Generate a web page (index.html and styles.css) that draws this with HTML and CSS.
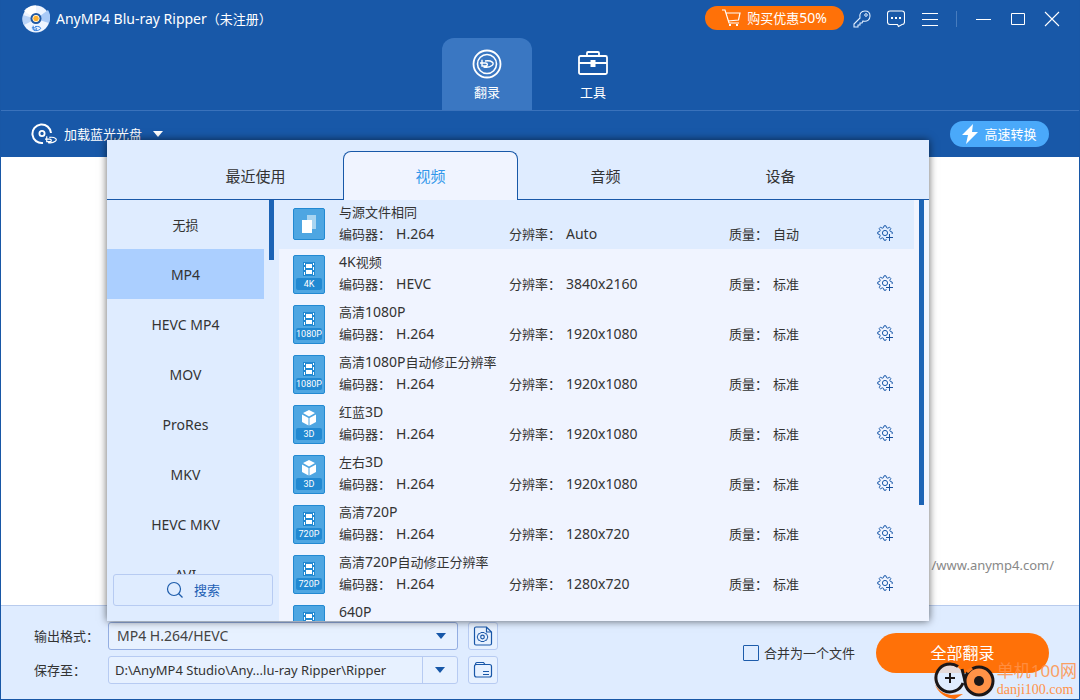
FILE: index.html
```html
<!DOCTYPE html>
<html lang="zh-CN">
<head>
<meta charset="utf-8">
<title>AnyMP4 Blu-ray Ripper</title>
<link rel="stylesheet" href="styles.css">
</head>
<body>
<svg class="sprite" aria-hidden="true">
  <symbol id="gear" viewBox="0 0 16 16"><g fill="none" stroke="#1d5cab"><path d="M13.300 6.500 15.200 7v2M13.300 6.500l-.5-1.300 1-1.700-1.300-1.300-1.700 1-1.300-.5L9 .8H7l-.5 1.900-1.300.5-1.700-1-1.300 1.300 1 1.700-.5 1.300L.8 7v2l1.900.5.5 1.300-1 1.700 1.300 1.300 1.700-1 1.300.5.500 1.900h2l.3-1"/><circle cx="8" cy="8" r="2.600"/><path d="M12.500 9v7M9 12.500h7" stroke="#17509c"/></g></symbol>
  <symbol id="film" viewBox="0 0 12 14"><path fill="#2289d2" d="M0 0h12v14H0z"/><path fill="#fff" d="M1 1h1v2H1zM1 5h1v3H1zM1 10h1v3H1zM10 1h1v2h-1zM10 5h1v3h-1zM10 10h1v3h-1zM3 2h6v4H3zM3 8h6v4H3z"/></symbol>
  <symbol id="cube" viewBox="0 0 16 18"><path fill="#fff" d="M8 1 14 4 8 7.600 2 4zM1 5.500 7.500 9v7.500L1 13zM15 5.500 8.500 9v7.500L15 13z"/></symbol>
  <symbol id="copy" viewBox="0 0 16 20"><path fill="#a9d5f1" d="M6 1h9v14H6z"/><path fill="#fff" d="M1 6h10v13H1z"/></symbol>
  <symbol id="arrow" viewBox="0 0 10 6"><path fill="currentColor" d="M0 0h10L5 6z"/></symbol>
  <symbol id="bluray" viewBox="0 0 14 9"><path fill="none" stroke="currentColor" stroke-width="1.400" d="M2 0v6.500h3.500c2.500 0 2.500-3 0-3H0M5 1.500C12 .5 15 4 12 6c-2 1.500-6 2-8.500 1.500"/></symbol>
</svg>
<div class="window">
  <header class="header">
    <div class="titlebar">
      <svg class="logo" viewBox="0 0 28 28"><circle cx="14" cy="14" r="13.500" fill="#edf4ff"/><path d="M14 14 2 6A14 14 0 0 1 14 .5z" fill="#fff"/><path d="M14 14 26 5A14 14 0 0 1 27 18z" fill="#a9caf7"/><path d="M14 14 1 10A14 14 0 0 0 2 20z" fill="#b8d3f8"/><circle cx="14" cy="13.500" r="5.500" fill="#2059a5"/><circle cx="14" cy="13.500" r="3.200" fill="#ffb02d" stroke="#fff0cf"/><use href="#bluray" x="9" y="20.500" width="11" height="6" color="#2475dc"/></svg>
      <h1 class="title">AnyMP4 Blu-ray Ripper<small>（未注册）</small></h1>
      <button class="buy"><svg width="19" height="18" viewBox="0 0 19 18"><g fill="none" stroke="#fff" stroke-width="1.200"><path d="M0 1h3l4 13h10M4 4h14l-1.500 7-10.500 1"/></g><path fill="#fff" d="M7 15h2v2H7zM14 15h2v2h-2z"/></svg><span>购买优惠<b>50%</b></span></button>
      <div class="tools">
        <button class="tool" aria-label="注册"><svg width="18" height="18" viewBox="0 0 18 18"><path fill="none" stroke="#e2efff" stroke-width="1.100" d="M7 8C6 4 8 1 12 1c3 0 5 2 5 5 0 4-3 6-7 5l-1 2H7v2H5v2H1v-3l6-6z"/><circle cx="13" cy="5" r="1.300" fill="none" stroke="#e2efff"/></svg></button>
        <button class="tool" aria-label="反馈"><svg width="18" height="18" viewBox="0 0 18 18"><path fill="none" stroke="#fff" stroke-width="1.100" d="M3 1h12q2.500 0 2.500 2.500V12q0 2.500-2.500 2.500l-3.500 2-1-2H3Q.5 14.500.5 12V3.500Q.5 1 3 1z"/><path fill="#fff" d="M4 7h2v2H4zM8 7h2v2H8zM12 7h2v2h-2z"/></svg></button>
        <button class="tool" aria-label="菜单"><svg width="18" height="18" viewBox="0 0 18 18"><path stroke="#fff" d="M1 3.500h16M1 9.500h16M1 15.500h16"/></svg></button>
      </div>
      <div class="controls">
        <button class="tool" aria-label="最小化"><svg width="16" height="16" viewBox="0 0 16 16"><path stroke="#fff" d="M0 8.500h15"/></svg></button>
        <button class="tool" aria-label="最大化"><svg width="16" height="16" viewBox="0 0 16 16"><path fill="none" stroke="#fff" d="M1.500 2.500h13v11h-13z"/></svg></button>
        <button class="tool" aria-label="关闭"><svg width="16" height="16" viewBox="0 0 16 16"><path stroke="#fff" stroke-width="1.100" d="m1 1 14 14M15 1 1 15"/></svg></button>
      </div>
    </div>
    <nav class="modes">
      <button class="mode mode-active"><svg width="30" height="30" viewBox="0 0 30 30"><g fill="none" stroke="#fff"><circle cx="15" cy="15" r="13.500" stroke-width="1.800"/><circle cx="15" cy="15" r="9.500" stroke-width="1.600"/></g><use href="#bluray" x="8" y="10.500" width="14" height="9"/></svg>翻录</button>
      <button class="mode"><svg width="30" height="30" viewBox="0 0 30 30"><g fill="none" stroke="#fff" stroke-width="1.800"><rect x="1" y="7" width="28" height="18" rx="1.500"/><path d="M9 7V4q0-1 1-1h10q1 0 1 1v3M1 14h28"/></g><path fill="#fff" d="M12.500 11h5v7h-5z"/></svg>工具</button>
    </nav>
  </header>
  <div class="toolbar">
    <button class="load"><svg width="26" height="22" viewBox="0 0 26 22"><g fill="none" stroke="#fff" stroke-width="2"><path d="M12 20A9.300 9.300 0 1 1 20 10"/><circle cx="11" cy="10.500" r="2.600" stroke-width="1.800"/></g><use href="#bluray" x="14" y="13" width="12" height="8"/></svg><span>加载蓝光光盘</span><svg class="caret" width="10" height="6"><use href="#arrow"/></svg></button>
    <button class="speed"><svg width="16" height="20" viewBox="0 0 16 20"><path fill="#fff" d="M11 0 0 11h6L4 20 16 8h-6z"/></svg>高速转换</button>
  </div>
  <main class="workspace"><a class="site" href="#">/www.anymp4.com/</a></main>
  <footer class="footer">
    <div class="fields">
      <label for="format">输出格式：</label>
      <div class="field field-format"><select id="format"><option>MP4 H.264/HEVC</option></select><svg class="select-caret" width="10" height="6"><use href="#arrow"/></svg></div>
      <button class="square" aria-label="格式设置"><svg width="20" height="20" viewBox="0 0 20 20"><g fill="none" stroke="#1957a8" stroke-width="1.200"><path d="M13.500 1H3Q1.500 1 1.500 2.500v15Q1.500 19 3 19h14q1.500 0 1.500-1.500V6zM13.500 1v5h5"/><path d="M7.800 6.500h3.400l.8 1.200h1.500l1.300 3.300-1.300 3.300H12l-.8 1.200H7.800L7 14.300H5.500L4.200 11l1.300-3.300H7z" stroke-width="1"/><circle cx="9.500" cy="11" r="1.800"/></g></svg></button>
      <label for="path">保存至：</label>
      <div class="field"><input id="path" value="D:\AnyMP4 Studio\Any...lu-ray Ripper\Ripper"><button class="path-menu" aria-label="选择路径"><svg width="10" height="6"><use href="#arrow"/></svg></button></div>
      <button class="square" aria-label="打开文件夹"><svg width="20" height="20" viewBox="0 0 20 20"><g fill="none" stroke="#1957a8" stroke-width="1.200"><path d="M2.500 4.500Q2.500 2.500 4 2.500h6.500l1.500 2h4.500q2 0 2 2V15q0 2-2 2h-13q-2 0-2-2V6.500q0-2 2-2H12"/><path d="M10 11.500h6M10 14.500h6"/></g></svg></button>
    </div>
    <label class="merge"><input type="checkbox">合并为一个文件</label>
    <button class="rip">全部翻录</button>
  </footer>

  <section class="popup">
    <div class="tabs">
      <button class="tab">最近使用</button>
      <button class="tab tab-active">视频</button>
      <button class="tab">音频</button>
      <button class="tab">设备</button>
    </div>
    <div class="popup-body">
      <aside class="sidebar">
        <div class="scroller">
          <ul class="formats">
            <li><button class="cjk">无损</button></li>
            <li><button class="chosen">MP4</button></li>
            <li><button>HEVC MP4</button></li>
            <li><button>MOV</button></li>
            <li><button>ProRes</button></li>
            <li><button>MKV</button></li>
            <li><button>HEVC MKV</button></li>
            <li><button>AVI</button></li>
          </ul>
          <div class="thumb thumb-short"></div>
        </div>
        <button class="search"><svg width="18" height="18" viewBox="0 0 18 18"><g fill="none" stroke="#1d5cab" stroke-width="1.200"><circle cx="8" cy="8" r="6.500"/><path d="m12.500 12.500 4 4"/></g></svg>搜索</button>
      </aside>
      <ul class="profiles">
        <li class="profile profile-source"><span class="badge badge-plain"><svg width="16" height="20"><use href="#copy"/></svg></span><h2>与源文件相同</h2><p>编码器：<b>H.264</b></p><p>分辨率：<b>Auto</b></p><p>质量：<i>自动</i></p><button class="gear" aria-label="设置"><svg width="16" height="16"><use href="#gear"/></svg></button></li>
        <li class="profile"><span class="badge"><svg width="12" height="14"><use href="#film"/></svg><em>4K</em></span><h2><b>4K</b>视频</h2><p>编码器：<b>HEVC</b></p><p>分辨率：<b>3840x2160</b></p><p>质量：<i>标准</i></p><button class="gear" aria-label="设置"><svg width="16" height="16"><use href="#gear"/></svg></button></li>
        <li class="profile"><span class="badge"><svg width="12" height="14"><use href="#film"/></svg><em>1080P</em></span><h2>高清<b>1080P</b></h2><p>编码器：<b>H.264</b></p><p>分辨率：<b>1920x1080</b></p><p>质量：<i>标准</i></p><button class="gear" aria-label="设置"><svg width="16" height="16"><use href="#gear"/></svg></button></li>
        <li class="profile"><span class="badge"><svg width="12" height="14"><use href="#film"/></svg><em>1080P</em></span><h2>高清<b>1080P</b>自动修正分辨率</h2><p>编码器：<b>H.264</b></p><p>分辨率：<b>1920x1080</b></p><p>质量：<i>标准</i></p><button class="gear" aria-label="设置"><svg width="16" height="16"><use href="#gear"/></svg></button></li>
        <li class="profile"><span class="badge badge-cube"><svg width="16" height="18"><use href="#cube"/></svg><em>3D</em></span><h2>红蓝<b>3D</b></h2><p>编码器：<b>H.264</b></p><p>分辨率：<b>1920x1080</b></p><p>质量：<i>标准</i></p><button class="gear" aria-label="设置"><svg width="16" height="16"><use href="#gear"/></svg></button></li>
        <li class="profile"><span class="badge badge-cube"><svg width="16" height="18"><use href="#cube"/></svg><em>3D</em></span><h2>左右<b>3D</b></h2><p>编码器：<b>H.264</b></p><p>分辨率：<b>1920x1080</b></p><p>质量：<i>标准</i></p><button class="gear" aria-label="设置"><svg width="16" height="16"><use href="#gear"/></svg></button></li>
        <li class="profile"><span class="badge"><svg width="12" height="14"><use href="#film"/></svg><em>720P</em></span><h2>高清<b>720P</b></h2><p>编码器：<b>H.264</b></p><p>分辨率：<b>1280x720</b></p><p>质量：<i>标准</i></p><button class="gear" aria-label="设置"><svg width="16" height="16"><use href="#gear"/></svg></button></li>
        <li class="profile"><span class="badge"><svg width="12" height="14"><use href="#film"/></svg><em>720P</em></span><h2>高清<b>720P</b>自动修正分辨率</h2><p>编码器：<b>H.264</b></p><p>分辨率：<b>1280x720</b></p><p>质量：<i>标准</i></p><button class="gear" aria-label="设置"><svg width="16" height="16"><use href="#gear"/></svg></button></li>
        <li class="profile"><span class="badge"><svg width="12" height="14"><use href="#film"/></svg></span><h2><b>640P</b></h2></li>
      </ul>
      <div class="track"><div class="thumb"></div></div>
    </div>
  </section>

  <div class="watermark">
    <svg width="62" height="37" viewBox="0 0 62 37"><path d="M5 5C-3 17 1 30 18 33l12-1-8 5C6 36-5 20 5 5z" fill="#ff6f0a"/><g fill="none" stroke="#1c1718" stroke-width="3"><circle cx="17" cy="17" r="14" fill="#e0ecff" fill-opacity=".85" stroke="none"/><path d="M25 4.500A14 14 0 1 0 30 21M29 7l3 12"/><circle cx="46" cy="19" r="14" fill="#ff9247"/><path d="m34 10 5-4" stroke="#ff7a1c"/></g><circle cx="46" cy="19" r="5" fill="#1c1718"/><path d="M17 11v10M12 16h10" stroke="#1c1718" stroke-width="2"/></svg>
    <div class="mark-text"><span>单机100网</span><small>danji100.com</small></div>
  </div>
</div>
</body>
</html>
```
FILE: styles.css
```css
* { box-sizing: border-box; margin: 0; padding: 0; }
body { font: 13px/20px "Noto Sans", "Noto Sans CJK SC", sans-serif; color: #333; }
button, input, select { font: inherit; color: inherit; background: none; border: 0; }
ul { list-style: none; }
svg { flex: none; }
b, i, em { font-style: normal; font-weight: 400; }
.sprite { position: absolute; width: 0; height: 0; }
.window { position: relative; display: flex; flex-direction: column; height: 100vh; min-height: 500px; border: 1px solid #1857a6; border-top: 0; background: #fff; overflow: hidden; }

.header { background: #1858a8; color: #fff; border-bottom: 1px solid #3a72bb; }
.titlebar { display: flex; align-items: center; height: 38px; padding: 0 19px 0 21px; }
.logo { width: 28px; height: 28px; }
.title { flex: 1; padding-left: 6px; font-size: 14px; font-weight: 400; }
.title small { font-size: 13px; }
.buy { display: flex; align-items: center; justify-content: center; gap: 6px; width: 139px; height: 24px; margin-bottom: 2px; border-radius: 12px; background: #ff7108; }
.buy b { font-size: 14px; }
.tools, .controls { display: flex; align-items: center; }
.tools { gap: 16px; padding: 0 17px 0 9px; }
.controls { gap: 18px; padding-left: 20px; background: linear-gradient(#477cbe, #477cbe) left center / 1px 16px no-repeat; }
.tool { display: flex; }
.modes { display: flex; justify-content: center; gap: 16px; }
.mode { display: flex; flex-direction: column; align-items: center; gap: 3px; width: 90px; height: 72px; padding-top: 11px; border-radius: 12px 12px 0 0; }
.mode-active { background: #3a77c2; }

.toolbar { display: flex; justify-content: space-between; align-items: center; height: 46px; padding: 0 30px; background: #1858a8; color: #fff; }
.load, .speed { display: flex; align-items: center; }
.load { gap: 7px; }
.load .caret { margin-left: 4px; }
.speed { justify-content: center; gap: 6px; width: 99px; height: 26px; border-radius: 13px; background: #4aa9fa; }

.workspace { flex: 1; display: flex; justify-content: flex-end; align-items: flex-end; padding: 0 25px 30px; }
.site { color: #888; font-size: 13px; text-decoration: none; }

.footer { display: flex; align-items: center; height: 94px; padding: 0 30px 0 33px; border-top: 1px solid #b8cbed; background: #dfecff; }
.fields { display: grid; grid-template-columns: 64px minmax(200px, 350px) 30px; gap: 6px 10px; align-items: center; }
.fields label { white-space: nowrap; }
.field { display: flex; align-items: center; position: relative; height: 28px; border: 1px solid #b7cbf2; border-radius: 3px; background: #e7f1ff; font-size: 14px; color: #1757a8; }
.fields label { margin-right: -10px; }
.field-format { border-color: #94aee2; }
.field select, .field input { flex: 1; min-width: 0; height: 100%; color: #444; }
.field select { appearance: none; padding-left: 8px; }
.field input { padding-left: 6px; font-size: 13px; color: #333; }
.select-caret { position: absolute; right: 11px; pointer-events: none; }
.path-menu { width: 35px; height: 100%; border-left: 1px solid #b7cbf2; color: #1757a8; display: grid; place-items: center; }
.square { display: grid; place-items: center; height: 28px; border: 1px solid #b7cbf2; border-radius: 3px; background: #e7f1ff; }
.merge { display: flex; align-items: center; gap: 5px; margin-left: auto; }
.merge input { appearance: none; width: 16px; height: 16px; border: 1px solid #1d5cab; border-radius: 1px; }
.rip { width: 173px; height: 40px; margin-left: 21px; border-radius: 20px; background: #ff7108; color: #fff; font-size: 16px; }

.popup { position: absolute; inset: 140px 150px 78px 106px; display: flex; flex-direction: column; background: #f0f4ff; box-shadow: 0 0 8px rgba(0, 0, 0, .6); }
.tabs { position: relative; display: flex; justify-content: center; align-items: flex-end; height: 60px; margin-bottom: -1px; background: linear-gradient(#1858a8, #1858a8) bottom / 100% 1px no-repeat #dfecff; }
.tab { width: 175px; height: 49px; font-size: 15px; color: #333; }
.tab-active { border: 1px solid #1858a8; border-bottom: 0; border-radius: 8px 8px 0 0; background: #f0f4ff; color: #3297ea; }
.popup-body { flex: 1; min-height: 0; display: flex; }
.sidebar { width: 172px; display: flex; flex-direction: column; background: #dfecff; }
.scroller { flex: 1; min-height: 0; display: flex; gap: 5px; overflow: hidden; }
.formats { width: 157px; }
.formats button { display: block; width: 100%; height: 50px; padding-top: 2px; font-size: 14px; }
.formats .cjk { font-size: 13px; }
.formats .chosen { background: #abcfff; }
.thumb { width: 5px; height: 306px; background: #1c63b5; }
.thumb-short { height: 61px; }
.search { display: flex; justify-content: center; align-items: center; gap: 10px; height: 32px; margin: 0 6px 15px; border: 1px solid #b7cbf2; border-radius: 3px; color: #1d60b5; }
.profiles { flex: 1; overflow: hidden; }
.profile { display: grid; grid-template-columns: 32px 184fr 220fr 148fr 16px; grid-template-rows: 22px 22px; height: 50px; padding: 2px 21px 0 14px; line-height: 22px; }
.profile-source { background: #dfecff; }
.profile h2 { grid-column: 2 / -1; padding-left: 14px; font-size: 13px; font-weight: 400; }
.profile p { white-space: nowrap; }
.profile h2 + p { padding-left: 14px; }
.profile b { font-size: 14px; }
.profile p b, .profile p i { padding-left: 5px; }
.gear { display: flex; align-items: center; height: 20px; }
.badge { grid-row: 1 / 3; display: flex; flex-direction: column; align-items: center; justify-content: space-between; width: 32px; height: 39px; margin-top: 4px; padding: 6px 2px 3px; border: 1px solid #2289d2; border-radius: 2px; background: #4ea6e2; color: #fff; }
.badge em { width: 26px; height: 12px; border-radius: 2px; background: #2289d2; font: 9px/12px Roboto, sans-serif; text-align: center; }
.badge-cube { padding-top: 3px; }
.badge-plain { height: 32px; margin-top: 7px; padding: 5px 0; }
.track { width: 15px; padding-left: 5px; }

.watermark { position: absolute; right: 2px; bottom: 0; display: flex; align-items: flex-end; gap: 2px; color: #ff9248; pointer-events: none; }
.mark-text { display: flex; flex-direction: column; font-size: 17px; line-height: 20px; }
.mark-text span { opacity: .85; }
.mark-text small { font: 14px/18px "Liberation Serif", serif; }
```
